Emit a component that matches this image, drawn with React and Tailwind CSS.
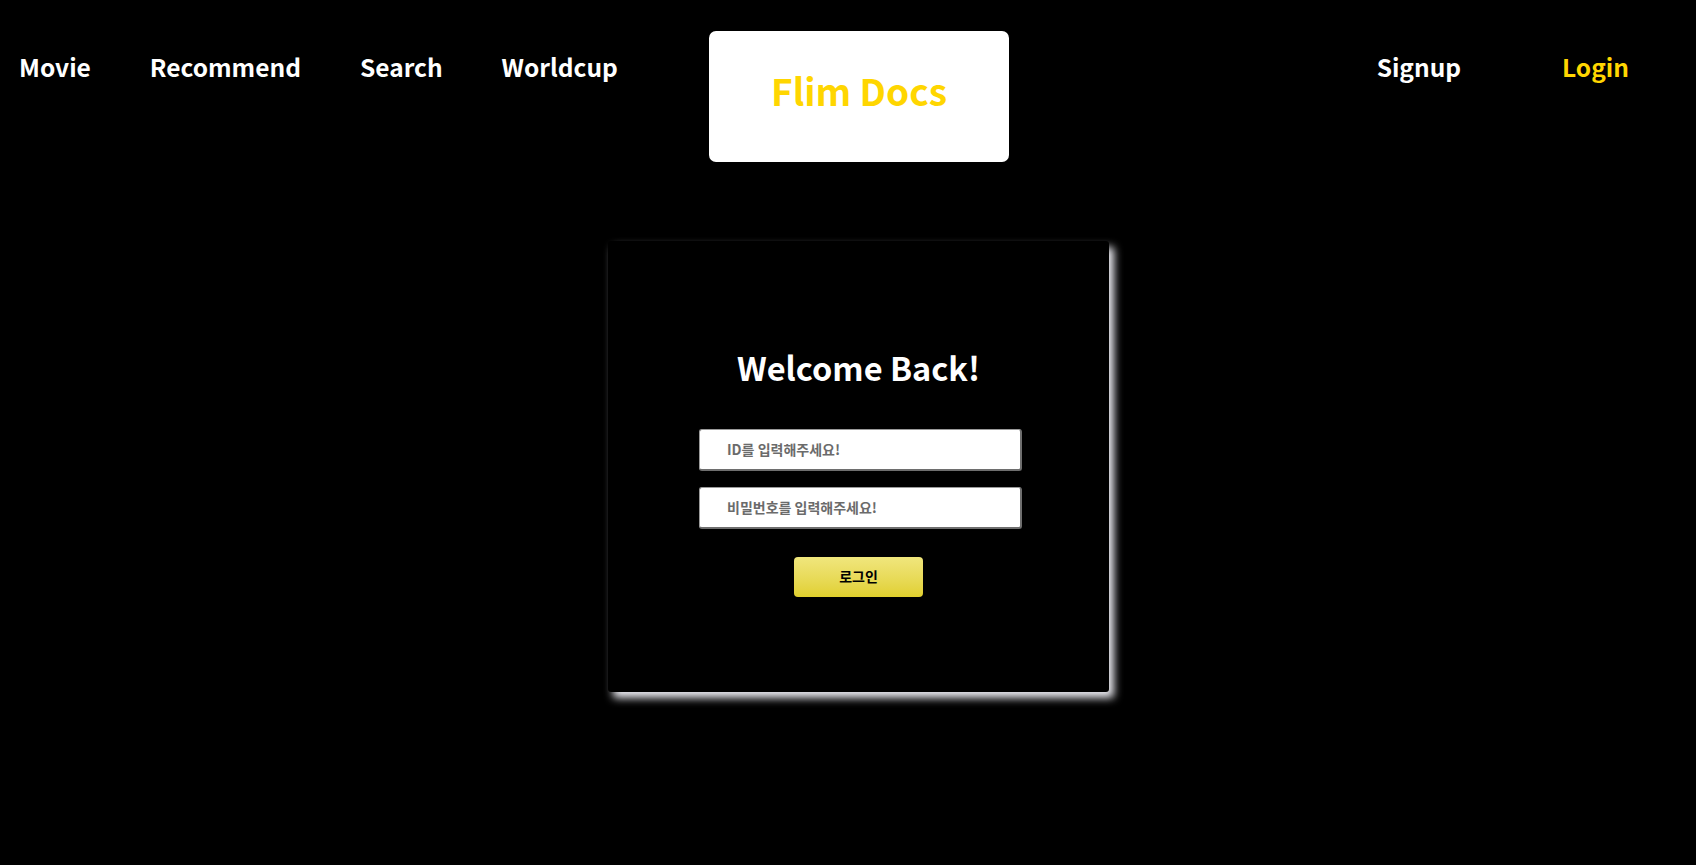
import React from 'react';

const navLeft = ['Movie', 'Recommend', 'Search', 'Worldcup'];

const Header = () => (
    <header className="flex items-start pt-[31px]">
        <nav className="w-[709px] h-[72px] flex items-center gap-[59px] pl-[19px]">
            {navLeft.map((item) => (
                <a key={item} className="text-white text-[24.5px] font-bold leading-none cursor-pointer">
                    {item}
                </a>
            ))}
        </nav>

        {/* logo box */}
        <div className="w-[300px] h-[131px] bg-white rounded-[7px] flex items-center justify-center pb-[12px]">
            <span className="text-[#ffd600] text-[37px] font-bold leading-none">Flim Docs</span>
        </div>

        <nav className="flex-1 h-[72px] flex items-center justify-end gap-[101px] pr-[67px]">
            <a className="text-white text-[24.5px] font-bold leading-none cursor-pointer">Signup</a>
            <a className="text-[#ffd600] text-[24.5px] font-bold leading-none cursor-pointer">Login</a>
        </nav>
    </header>
);

const inputCls =
    'w-[323px] h-[42px] ml-[4px] bg-white rounded-[3px] border border-[#9a9a9a] border-b-2 border-r-2 border-b-[#6e6e6e] border-r-[#6e6e6e] pl-[27px] text-[14px] font-bold text-[#444] placeholder:text-[#6b6b6b] outline-none';

const LoginCard = () => (
    <div className="flex justify-center pl-[21px] mt-[79px]">
        <div className="w-[501px] h-[451px] bg-black rounded-[3px] shadow-[5px_6px_8px_#ececf2] flex flex-col items-center pt-[110px]">
            <h1 className="text-white text-[32.5px] font-bold leading-none">Welcome Back!</h1>

            <form className="flex flex-col items-center mt-[45px]" onSubmit={(e) => e.preventDefault()}>
                <input type="text" placeholder="ID를 입력해주세요!" className={inputCls} />
                <input type="password" placeholder="비밀번호를 입력해주세요!" className={`${inputCls} mt-[16px]`} />
                <button
                    type="submit"
                    className="w-[129px] h-[40px] mt-[28px] rounded-[4px] bg-gradient-to-b from-[#f0e67c] to-[#e1d02c] text-black text-[14px] font-bold"
                >
                    로그인
                </button>
            </form>
        </div>
    </div>
);

export default function App() {
    return (
        <div className="min-h-screen bg-black font-['Noto_Sans_CJK_KR','Noto_Sans',sans-serif]">
            <Header />
            <LoginCard />
        </div>
    );
}
